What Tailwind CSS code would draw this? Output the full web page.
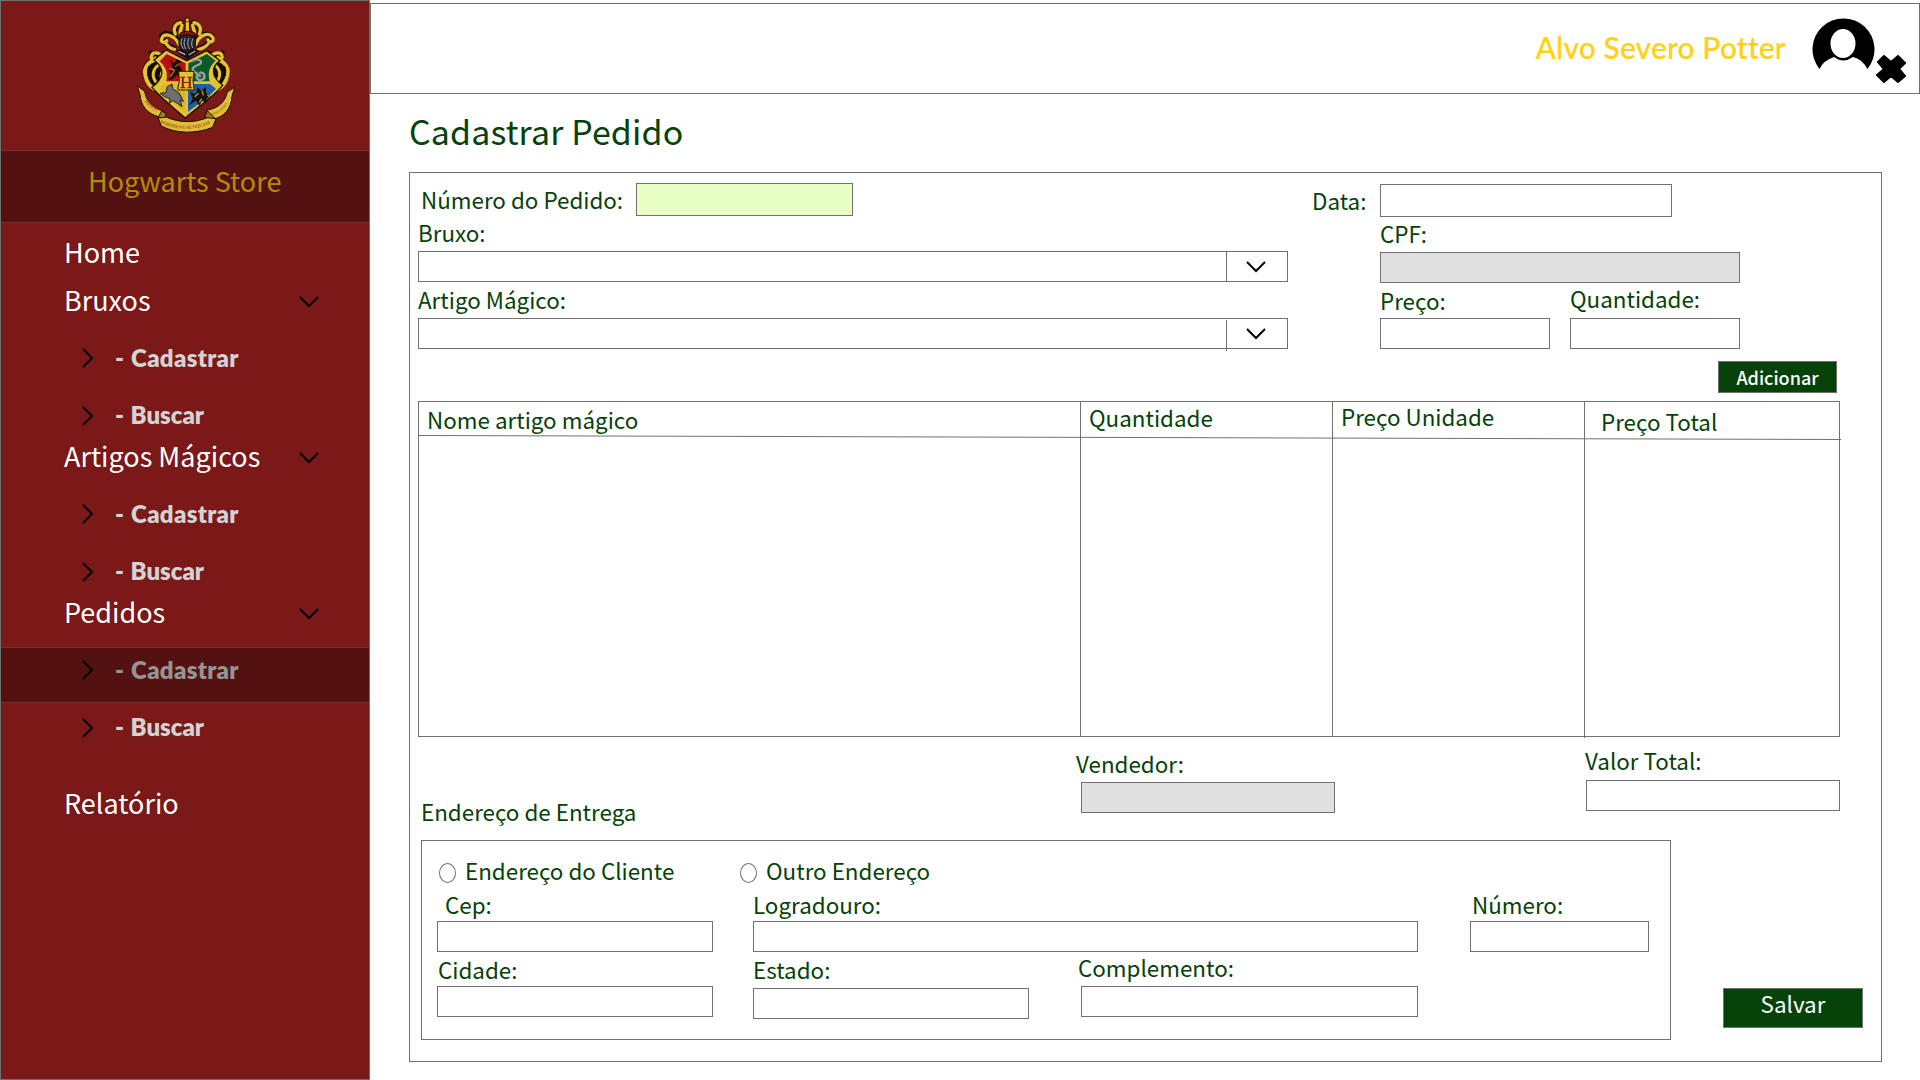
<!DOCTYPE html>
<html lang="pt-BR">
<head>
<meta charset="utf-8">
<title>Hogwarts Store - Cadastrar Pedido</title>
<script src="https://cdn.jsdelivr.net/npm/@tailwindcss/browser@4"></script>
</head>
<body class="flex h-[1080px] w-[1920px] overflow-hidden bg-white font-['Noto_Sans_CJK_SC','Noto_Sans',sans-serif]">

<aside class="flex w-[370px] shrink-0 flex-col border border-[#707070] bg-[#7b1818] text-white">
  <div class="h-[149px] shrink-0 pl-[99px]">
    <svg class="-mt-px h-[150px] w-[180px]" viewBox="0 0 540 450" fill="none">
      <!-- mantling -->
      <g fill="#120c04">
        <path d="M200 170C164 162 126 180 129 216c2 30 16 54 40 62l22-26c14-18 16-50 9-82zM320 170c36-8 70 8 67 46-2 30-16 54-40 62l-20-26c-14-18-16-50-7-82z"/>
      </g>
      <g stroke="#120c04" stroke-width="16" stroke-linecap="round">
        <path d="M236 128c-8-20-22-28-40-28M284 128c8-20 24-28 42-24M222 146c-22-6-34-18-36-40M298 146c22-6 34-16 38-38M200 160c-22 6-38 4-46 0M320 160c22 6 38 4 46 0"/>
        <path d="M226 98c-6-16 4-28 16-30M298 98c4-16-6-28-18-30M262 60v36"/>
      </g>
      <g stroke="#e3c233" stroke-width="10" stroke-linecap="round">
        <path d="M236 132c-12-26-42-36-50-18-6 12 8 18 14 8M288 132c8-26 38-38 50-20 6 12-8 18-14 8"/>
        <path d="M224 148c-14-2-26-14-28-22M296 148c14-2 28-12 32-22M190 170c-14-14-34-16-36 0-2 8 8 12 12 4M330 170c14-14 34-16 36-2 2 8-8 12-12 4"/>
        <path d="M184 179c-34-4-54 21-48 47 4 20 14 34 28 42M336 179c34-4 52 21 46 47-4 20-14 34-28 42" stroke-width="12"/>
        <path d="M186 190c-24 8-34 32-20 54M194 206c-12 10-14 26-4 38M334 190c24 8 32 32 18 54M326 206c12 10 14 26 4 38" stroke-width="9"/>
        <path d="M226 102c-8-16 0-32 16-34M298 102c8-16 0-32-16-34M262 60v36M246 76l-6 22M278 76l6 22"/>
      </g>
      <path d="M146 200c-6 16 0 34 10 46M374 200c6 16 0 34-10 46" stroke="#120c04" stroke-width="4" stroke-linecap="round"/>
      <path d="M240 100c12-8 34-8 46 0l-6 12h-36z" fill="#8f1218" stroke="#120c04" stroke-width="3"/>
      <circle cx="262" cy="60" r="6" fill="#e3c233" stroke="#120c04" stroke-width="2"/>
      <!-- helmet -->
      <path d="M240 112c10-10 34-10 44 0 6 14 2 30-8 38h-28c-12-8-14-24-8-38z" fill="#23252a" stroke="#0b0b0b" stroke-width="3"/>
      <path d="M246 116c-6 12-2 24 6 32M256 114c-6 12-4 24 2 34M267 114c-6 12-4 24 2 34M278 116c-4 12-4 20 0 28" stroke="#a9adb3" stroke-width="3"/>
      <path d="M226 152l20-6 16 10 16-10 22 6-20 14-18 12-18-12z" fill="#121212"/>
      <path d="M236 154l20 10M286 153l-20 12" stroke="#b4b8bd" stroke-width="4"/>
      <!-- shield -->
      <path d="M198 150l62 32 60-30 40 30c-28 20-26 48 8 74-28 34-68 60-112 98-42-36-74-62-100-92 36-28 40-56 6-82z" fill="#e5c235" stroke="#1a1205" stroke-width="4"/>
      <path d="M200 162l57 28v54h-58c6-26-2-44-20-60z" fill="#b50f14"/>
      <path d="M265 190l56-28 26 20c-20 18-24 36-18 62h-64z" fill="#0c5a28"/>
      <path d="M192 252h64v86c-28-26-58-48-76-72z" fill="#dab62b"/>
      <path d="M264 252h66l18 14c-20 24-54 46-84 70z" fill="#1f60a4"/>
      <path d="M210 180l12 10 8-12 14 6-8 12 12 14-12 6 8 16-14-6-12 12-14 2 10-14-8-16 14 2z" fill="#1d0c05"/>
      <path d="M208 206l16 4-12 20M238 190l-12 10" stroke="#d9a023" stroke-width="3"/>
      <path d="M276 184c14-10 32-4 26 6-6 8-24 6-24 18 0 10 14 10 22 20M300 218c16-2 18 18 4 22-12 2-18-10-10-16" stroke="#9aa3a3" stroke-width="7" stroke-linecap="round"/>
      <path d="M276 186c12-6 22-4 24 0M282 206c8 8 12 8 18 16" stroke="#4c5555" stroke-width="2"/>
      <path d="M180 280l18-2 4-18 14-8 2 14 20 14 12 24-10-4 6 20-14-10-14-8-10 8 2-14-16-6z" fill="#6d6f73" stroke="#222" stroke-width="3"/>
      <path d="M270 276l18 6 4-20 12 10 14-12 0 18 16 12-14 6 2 14-16-8-8 16-10-16-20 14 10-20z" fill="#17120a"/>
      <path d="M284 290l12-10M306 272l4 14M298 306l8-10M322 284l8 8" stroke="#c79a2b" stroke-width="4"/>
      <path d="M236 214h46l-3 28 4 28h-50l5-28z" fill="#e6bf33" stroke="#2b1b05" stroke-width="3"/>
      <text x="259" y="263" text-anchor="middle" font-family="Liberation Serif" font-size="52" fill="#861510" stroke="#861510" stroke-width="1">H</text>
      <!-- ribbon -->
      <g stroke="#1a1205" stroke-width="3">
        <path d="M112 258l22 16c4 28 22 50 54 58l-2 26-10-8c-34-8-54-34-56-66z" fill="#e2bd37"/>
        <path d="M404 262l-22 14c-6 28-26 50-62 54l4 24 12 4c38-6 58-34 60-70z" fill="#e2bd37"/>
        <path d="M174 352l22-2c44 20 90 20 132 0l20 6-10 26c-50 20-108 20-154-4z" fill="#e2bd37"/>
        <path d="M184 334l14 4-2 14-22 2zM322 332l-8 20 32 4z" fill="#9d7a18"/>
      </g>
      <path id="motto-left" d="M134 304q16 26 60 40"/>
      <path id="motto-mid" d="M180 369q84 38 168-6"/>
      <path id="motto-right" d="M334 346q40-8 66-66"/>
      <g font-family="Liberation Serif" font-weight="bold" fill="#a35a18">
        <text font-size="13"><textPath href="#motto-left">DRACO</textPath></text>
        <text font-size="14"><textPath href="#motto-mid">DORMIENS NUNQUAM</textPath></text>
        <text font-size="9"><textPath href="#motto-right">TITILLANDUS</textPath></text>
      </g>
    </svg>
  </div>

  <div class="h-[73px] shrink-0 border-y border-[#732e2e] bg-[#541111] pl-[87px] pt-1.5 text-[27px] leading-[48px] text-[#b38c0c]">Hogwarts Store</div>

  <nav class="pt-1 text-[27px] leading-[49px]">
    <div class="h-12 pl-[63px]">Home</div>

    <div class="flex h-12 items-start justify-between pl-[63px] pr-[50px]">Bruxos
      <svg class="mt-[21px] h-3 w-5" viewBox="0 0 20 12" fill="none" stroke="#000" stroke-width="2"><path d="M1 1l9 9 9-9"/></svg>
    </div>
    <ul class="pt-3 font-['Lato',sans-serif] text-[24px] font-extrabold leading-6 text-[#d3d3d3]">
      <li class="mb-0.5 flex h-14 items-start pl-[81px]">
        <svg class="mt-[13px] h-5 w-3" viewBox="0 0 12 20" fill="none" stroke="#000" stroke-width="2"><path d="M1 1l9 9-9 9"/></svg>
        <span class="ml-[21px] mt-[11px] tracking-[0.3px] [word-spacing:1px]">- Cadastrar</span></li>
      <li class="flex h-[38px] items-start pl-[81px]">
        <svg class="mt-[13px] h-5 w-3" viewBox="0 0 12 20" fill="none" stroke="#000" stroke-width="2"><path d="M1 1l9 9-9 9"/></svg>
        <span class="ml-[21px] mt-[10px] [word-spacing:1px]">- Buscar</span></li>
    </ul>

    <div class="flex h-12 items-start justify-between pl-[63px] pr-[50px]">Artigos Mágicos
      <svg class="mt-[21px] h-3 w-5" viewBox="0 0 20 12" fill="none" stroke="#000" stroke-width="2"><path d="M1 1l9 9 9-9"/></svg>
    </div>
    <ul class="pt-3 font-['Lato',sans-serif] text-[24px] font-extrabold leading-6 text-[#d3d3d3]">
      <li class="mb-0.5 flex h-14 items-start pl-[81px]">
        <svg class="mt-[13px] h-5 w-3" viewBox="0 0 12 20" fill="none" stroke="#000" stroke-width="2"><path d="M1 1l9 9-9 9"/></svg>
        <span class="ml-[21px] mt-[11px] tracking-[0.3px] [word-spacing:1px]">- Cadastrar</span></li>
      <li class="flex h-[38px] items-start pl-[81px]">
        <svg class="mt-[13px] h-5 w-3" viewBox="0 0 12 20" fill="none" stroke="#000" stroke-width="2"><path d="M1 1l9 9-9 9"/></svg>
        <span class="ml-[21px] mt-[10px] [word-spacing:1px]">- Buscar</span></li>
    </ul>

    <div class="flex h-12 items-start justify-between pl-[63px] pr-[50px]">Pedidos
      <svg class="mt-[21px] h-3 w-5" viewBox="0 0 20 12" fill="none" stroke="#000" stroke-width="2"><path d="M1 1l9 9 9-9"/></svg>
    </div>
    <ul class="pt-3 font-['Lato',sans-serif] text-[24px] font-extrabold leading-6 text-[#d3d3d3]">
      <li class="mb-0.5 flex h-14 items-start border-y border-[#732e2e] bg-[#541111] pl-[81px] text-[#959595]">
        <svg class="mt-3 h-5 w-3" viewBox="0 0 12 20" fill="none" stroke="#000" stroke-width="2"><path d="M1 1l9 9-9 9"/></svg>
        <span class="ml-[21px] mt-[10px] tracking-[0.3px] [word-spacing:1px]">- Cadastrar</span></li>
      <li class="flex h-[38px] items-start pl-[81px]">
        <svg class="mt-[13px] h-5 w-3" viewBox="0 0 12 20" fill="none" stroke="#000" stroke-width="2"><path d="M1 1l9 9-9 9"/></svg>
        <span class="ml-[21px] mt-[10px] [word-spacing:1px]">- Buscar</span></li>
    </ul>

    <div class="mt-[35px] pl-[63px]">Relatório</div>
  </nav>
</aside>

<main class="flex w-[1550px] flex-col text-[22.4px] leading-8 text-[#054207]">
  <header class="mt-[3px] flex h-[91px] shrink-0 items-start justify-end border border-[#707070] pr-3">
    <span class="mr-[26px] mt-[25px] font-['Lato',sans-serif] text-[30px] font-semibold leading-9 tracking-[0.08px] text-[#ffd21a]">Alvo Severo Potter</span>
    <svg class="mt-[13px] h-[66px] w-[95px]" viewBox="0 0 95 66">
      <path d="M7.500 52A31 31 0 1 1 55.500 52Q50 42 41 40Q31 47 22 40Q12 43 7.500 52z" fill="#000"/>
      <ellipse cx="31" cy="26.500" rx="12.500" ry="14.500" fill="#fff"/>
      <path d="M66 45l6-6 7 6 7-6 7 7-6 6 6 7-7 6-7-6-7 6-7-7 7-6z" stroke="#000" stroke-width="2" stroke-linejoin="round"/>
    </svg>
  </header>

  <h1 class="mt-[13px] h-[65px] pl-[39px] text-[33.9px] leading-[48px] tracking-[0.15px]">Cadastrar Pedido</h1>

  <form class="ml-[39px] flex h-[890px] w-[1473px] shrink-0 flex-col border border-[#707070]">
    <section class="flex pl-2">
      <div class="flex w-[870px] flex-col pt-[10px]">
        <div class="flex h-[33px] pl-[3px]"><label class="w-[215px] whitespace-nowrap">Número do Pedido:</label><div class="h-[33px] w-[217px] border border-[#707070] bg-[#e8ffc4]"></div></div>
        <label class="h-[35px]">Bruxo:</label>
        <div class="flex h-[31px] border border-[#707070]">
          <div class="w-[808px] border-r border-[#707070]"></div>
          <svg class="ml-[19px] mt-[9px] h-3 w-5" viewBox="0 0 20 12" fill="none" stroke="#000" stroke-width="2"><path d="M1 1l9 9 9-9"/></svg>
        </div>
        <label class="h-9 pt-px">Artigo Mágico:</label>
        <div class="flex h-[31px] border border-[#707070]">
          <div class="mt-px h-[31px] w-[808px] border-r border-[#707070]"></div>
          <svg class="ml-[19px] mt-[9px] h-3 w-5" viewBox="0 0 20 12" fill="none" stroke="#000" stroke-width="2"><path d="M1 1l9 9 9-9"/></svg>
        </div>
      </div>
      <label class="ml-6 w-[68px] pt-[11px]">Data:</label>
      <div class="flex w-[360px] flex-col pt-[11px]">
        <div class="h-[33px] w-[292px] border border-[#707070]"></div>
        <label class="h-[35px]">CPF:</label>
        <div class="h-[31px] border border-[#707070] bg-[#e0e0e0]"></div>
        <div class="flex gap-5">
          <div class="w-[170px]"><label class="block h-[35px] pt-px">Preço:</label><div class="h-[31px] border border-[#707070]"></div></div>
          <div class="w-[170px]"><label class="block h-[35px] leading-[30px]">Quantidade:</label><div class="h-[31px] border border-[#707070]"></div></div>
        </div>
      </div>
    </section>

    <button type="button" class="ml-[1308px] mt-3 h-8 w-[119px] border border-[#707070] bg-[#054207] text-[18px] font-medium leading-[31px] text-white">Adicionar</button>

    <section class="relative ml-2 mt-2 grid h-[336px] w-[1422px] shrink-0 grid-cols-[662px_252px_252px_1fr] border border-[#707070]">
      <div class="h-[335px] border-r border-[#707070] pl-2 pt-px">Nome artigo mágico</div>
      <div class="h-[335px] border-r border-[#707070] pl-2 leading-[30px]">Quantidade</div>
      <div class="h-[336px] border-r border-[#707070] pl-2 leading-7">Preço Unidade</div>
      <div class="pl-4 pt-[3px]">Preço Total</div>
      <svg class="absolute -left-px top-8 h-2 w-[1423px]" viewBox="0 0 1423 8"><path d="M0 1.500L1423 5.500" stroke="#707070"/></svg>
    </section>

    <section class="flex h-[103px] shrink-0 pl-[11px]">
      <div class="w-[655px] pt-[58px]">Endereço de Entrega</div>
      <div class="pt-[10px]"><label class="block h-[35px]">Vendedor:</label><div class="ml-[5px] h-[31px] w-[254px] border border-[#707070] bg-[#e0e0e0]"></div></div>
      <div class="ml-[250px] pt-[7px]"><label class="block h-9">Valor Total:</label><div class="ml-px h-[31px] w-[254px] border border-[#707070]"></div></div>
    </section>

    <section class="flex items-start pl-[11px]">
      <div class="h-[200px] w-[1250px] border border-[#707070] pt-[13px]">
        <div class="flex h-[31px] pl-[17px]">
          <span class="mt-[9px] h-5 w-[17px] rounded-[50%] border border-[#707070]"></span><label class="ml-[9px] w-[275px]">Endereço do Cliente</label>
          <span class="mt-[9px] h-5 w-[17px] rounded-[50%] border border-[#707070]"></span><label class="ml-[9px]">Outro Endereço</label>
        </div>
        <div class="flex pl-[15px] pt-[3px]">
          <div class="w-[276px]"><label class="block h-[33px] pl-2">Cep:</label><div class="h-[31px] border border-[#707070]"></div></div>
          <div class="ml-10 w-[665px]"><label class="block h-[33px]">Logradouro:</label><div class="h-[31px] border border-[#707070]"></div></div>
          <div class="ml-[52px] w-[179px]"><label class="block h-[33px] pl-0.5">Número:</label><div class="h-[31px] border border-[#707070]"></div></div>
        </div>
        <div class="flex pl-[15px] pt-px">
          <div class="w-[276px]"><label class="block h-[33px] pl-px">Cidade:</label><div class="h-[31px] border border-[#707070]"></div></div>
          <div class="ml-10 w-[276px]"><label class="block h-[35px]">Estado:</label><div class="h-[31px] border border-[#707070]"></div></div>
          <div class="ml-[48px] w-[341px]"><label class="block h-[33px] pl-px leading-7">Complemento:</label><div class="ml-1 h-[31px] border border-[#707070]"></div></div>
        </div>
      </div>
      <button type="button" class="ml-[52px] mt-[148px] h-10 w-[140px] border border-[#707070] bg-[#054207] pb-[9px] leading-[29px] text-white">Salvar</button>
    </section>
  </form>
</main>
</body>
</html>
